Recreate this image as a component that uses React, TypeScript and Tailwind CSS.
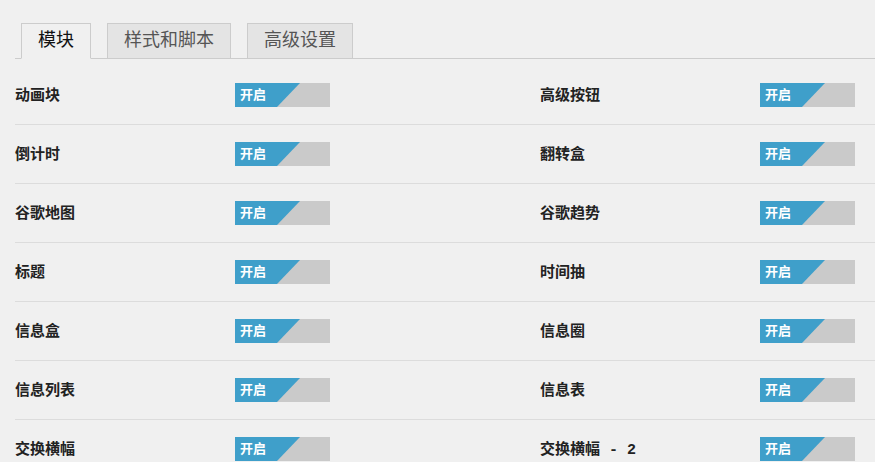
const rows: [string, string][] = [
  ['动画块', '高级按钮'],
  ['倒计时', '翻转盒'],
  ['谷歌地图', '谷歌趋势'],
  ['标题', '时间抽'],
  ['信息盒', '信息圈'],
  ['信息列表', '信息表'],
  ['交换横幅', '交换横幅 - 2'],
];

const tabs = ['模块', '样式和脚本', '高级设置'];

function Toggle() {
  return (
    <div className="flex h-[24px] w-[95px] shrink-0 bg-[#cacaca]">
      <div className="flex h-full w-[65px] items-center bg-[#3f9fca] pl-[5px] text-[13px] font-bold leading-none text-white [clip-path:polygon(0_0,100%_0,42px_100%,0_100%)]">
        开启
      </div>
    </div>
  );
}

function Cell({ label }: { label: string }) {
  return (
    <div className="flex w-[525px] shrink-0 items-center">
      <div className="w-[220px] shrink-0 pt-[5px] text-[15px] font-bold text-[#222] whitespace-pre">
        {label}
      </div>
      <Toggle />
    </div>
  );
}

export default function App() {
  return (
    <div className="h-[462px] w-[875px] overflow-hidden bg-[#f0f0f0] pl-[15px] pt-[23px] font-['Liberation_Mono','Noto_Sans_CJK_SC',monospace]">
      <div className="flex gap-[16px] border-b border-[#cccccc] pl-[6px]">
        {tabs.map((t, i) => (
          <div
            key={t}
            className={
              i === 0
                ? 'mb-[-1px] h-[36px] border border-b-[#f0f0f0] border-[#cccccc] bg-[#f0f0f0] px-[16px] pt-[5px] text-[18px] leading-[24px] text-[#111]'
                : 'h-[35px] border border-b-0 border-[#cccccc] bg-[#e4e4e4] px-[16px] pt-[5px] text-[18px] leading-[24px] text-[#555]'
            }
          >
            {t}
          </div>
        ))}
      </div>
      <div className="pt-[7px]">
        {rows.map(([a, b]) => (
          <div key={a + b} className="flex h-[59px] w-[1050px] border-b border-[#dcdcdc]">
            <Cell label={a} />
            <Cell label={b} />
          </div>
        ))}
      </div>
    </div>
  );
}
